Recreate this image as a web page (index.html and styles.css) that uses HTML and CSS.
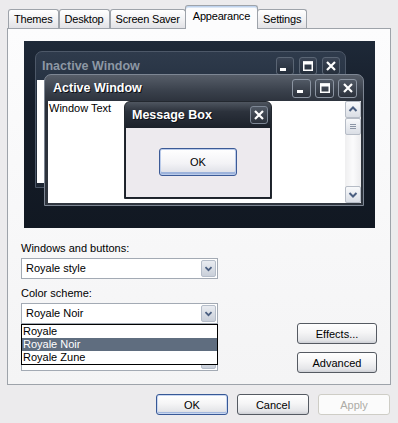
FILE: index.html
```html
<!DOCTYPE html>
<html>
<head>
<meta charset="utf-8">
<title>Display Properties - Appearance</title>
<link rel="stylesheet" href="styles.css">
</head>
<body>
<div class="dialog">
  <div class="tabs">
    <div class="tab">Themes</div>
    <div class="tab">Desktop</div>
    <div class="tab">Screen Saver</div>
    <div class="tab active">Appearance</div>
    <div class="tab">Settings</div>
  </div>
  <div class="panel">
    <div class="preview">
      <div class="win inactive">
        <div class="titlebar">
          <span class="title">Inactive Window</span>
          <div class="tbtns">
            <div class="tb"><svg viewBox="0 0 12 12" width="12" height="12"><rect x="1" y="8" width="6" height="3" fill="#fff"/></svg></div>
            <div class="tb"><svg viewBox="0 0 12 12" width="12" height="12"><rect x="1.75" y="2" width="8.5" height="8.25" fill="none" stroke="#fff" stroke-width="1.5"/><rect x="1" y="1.5" width="10" height="3" fill="#fff"/></svg></div>
            <div class="tb"><svg viewBox="0 0 12 12" width="12" height="12"><path d="M2 2 L10 10 M10 2 L2 10" stroke="#fff" stroke-width="2.2"/></svg></div>
          </div>
        </div>
        <div class="wbody"></div>
      </div>
      <div class="win active">
        <div class="titlebar">
          <span class="title">Active Window</span>
          <div class="tbtns">
            <div class="tb"><svg viewBox="0 0 12 12" width="12" height="12"><rect x="1" y="8" width="6" height="3" fill="#fff"/></svg></div>
            <div class="tb"><svg viewBox="0 0 12 12" width="12" height="12"><rect x="1.75" y="2" width="8.5" height="8.25" fill="none" stroke="#fff" stroke-width="1.5"/><rect x="1" y="1.5" width="10" height="3" fill="#fff"/></svg></div>
            <div class="tb"><svg viewBox="0 0 12 12" width="12" height="12"><path d="M2 2 L10 10 M10 2 L2 10" stroke="#fff" stroke-width="2.2"/></svg></div>
          </div>
        </div>
        <div class="wbody">
          <div class="wtext">Window Text</div>
          <div class="sb">
            <div class="sbbtn"><svg viewBox="0 0 14 15" width="14" height="15"><path d="M3.5 9 L7 5.5 L10.5 9" fill="none" stroke="#4A5E80" stroke-width="2"/></svg></div>
            <div class="sbbtn thumb"><svg viewBox="0 0 14 15" width="14" height="15"><path d="M4 5.5 H10 M4 7.5 H10 M4 9.5 H10" stroke="#8C96A6" stroke-width="1"/></svg></div>
            <div class="sbtrack"></div>
            <div class="sbbtn"><svg viewBox="0 0 14 15" width="14" height="15"><path d="M3.5 6 L7 9.5 L10.5 6" fill="none" stroke="#4A5E80" stroke-width="2"/></svg></div>
          </div>
        </div>
      </div>
      <div class="msgbox">
        <div class="titlebar">
          <span class="title">Message Box</span>
          <div class="tbtns">
            <div class="tb"><svg viewBox="0 0 12 12" width="12" height="12"><path d="M2 2 L10 10 M10 2 L2 10" stroke="#fff" stroke-width="2.2"/></svg></div>
          </div>
        </div>
        <div class="mbody">
          <div class="mok">OK</div>
        </div>
      </div>
    </div>
    <div class="controls">
      <div class="fields">
        <div class="lbl">Windows and buttons:</div>
        <div class="combo"><span class="ctext">Royale style</span><span class="carrow"><svg viewBox="0 0 15 17" width="15" height="17"><path d="M4 7 L7.5 10.5 L11 7" fill="none" stroke="#4A5E80" stroke-width="2"/></svg></span></div>
        <div class="lbl gap">Color scheme:</div>
        <div class="combo open"><span class="ctext">Royale Noir</span><span class="carrow"><svg viewBox="0 0 15 17" width="15" height="17"><path d="M4 7 L7.5 10.5 L11 7" fill="none" stroke="#4A5E80" stroke-width="2"/></svg></span>
          <div class="dlist">
            <div class="item">Royale</div>
            <div class="item sel">Royale Noir</div>
            <div class="item">Royale Zune</div>
          </div>
        </div>
        <div class="lbl gap2"></div>
        <div class="combo last"><span class="ctext"></span><span class="carrow"><svg viewBox="0 0 15 17" width="15" height="17"><path d="M4 7 L7.5 10.5 L11 7" fill="none" stroke="#4A5E80" stroke-width="2"/></svg></span></div>
      </div>
      <div class="side">
        <button class="btn wide">Effects...</button>
        <button class="btn wide">Advanced</button>
      </div>
    </div>
  </div>
  <div class="footer">
    <button class="btn default">OK</button>
    <button class="btn">Cancel</button>
    <button class="btn disabled">Apply</button>
  </div>
</div>
</body>
</html>
```
FILE: styles.css
```css
* { box-sizing: border-box; }
html, body { margin: 0; padding: 0; }
body {
  width: 398px;
  height: 423px;
  overflow: hidden;
  background: #ECEBED;
  font-family: "Liberation Sans", Arial, sans-serif;
  font-size: 11px;
  color: #000;
}

/* Tabs */
.tabs {
  display: flex;
  align-items: flex-end;
  height: 28px;
  padding-left: 8px;
}
.tab {
  height: 19px;
  padding: 0 5px;
  letter-spacing: -0.2px;
  line-height: 19px;
  border: 1px solid #9EA3AA;
  border-bottom: none;
  border-radius: 3px 3px 0 0;
  background: linear-gradient(#FFFFFF, #F1F1F3 55%, #E2E2E6);
  white-space: nowrap;
}
.tab.active {
  position: relative;
  z-index: 1;
  height: 24px;
  margin: 0 -1px -1px -1px;
  padding: 0 7px;
  line-height: 21px;
  background: #FCFCFD;
  box-shadow: inset 0 1px 0 #BFD3EE, inset 0 2px 0 #DCE7F5;
}

/* Panel */
.panel {
  margin-left: 7px;
  width: 384px;
  height: 357px;
  border: 1px solid #9EA3AA;
  background: linear-gradient(#FCFCFD, #F4F4F5);
  padding: 12px 13px 0 13px;
}

/* Preview */
.preview {
  position: relative;
  margin-left: 3px;
  width: 351px;
  height: 187px;
  background: linear-gradient(#1E2938 0%, #161E2A 35%, #111822 100%);
  overflow: hidden;
}
.win {
  position: absolute;
  display: flex;
  flex-direction: column;
  border-radius: 7px 7px 0 0;
}
.win.inactive {
  left: 11px;
  top: 10px;
  width: 311px;
  height: 137px;
  border: 1px solid #4D5868;
  background: linear-gradient(#2F3B4C 0%, #243040 30%, #1E2734 100%);
  padding: 0 1px 4px 1px;
}
.win.active {
  left: 20px;
  top: 33px;
  width: 320px;
  height: 132px;
  border: 1px solid #7D8693;
  background: linear-gradient(#575E69 0%, #3A414C 12%, #2A303A 22%, #30363F 100%);
  padding: 0 2px 2px 3px;
}
.titlebar {
  display: flex;
  align-items: center;
  justify-content: space-between;
  flex: none;
}
.inactive .titlebar { height: 28px; padding: 0 4px 0 5px; }
.active .titlebar { height: 26px; padding: 0 4px 0 5px; }
.title {
  font-weight: bold;
  font-size: 12.5px;
  white-space: nowrap;
}
.inactive .title { color: #8D97A4; }
.active .title, .msgbox .title { color: #FFFFFF; text-shadow: 1px 1px 0 #0C0F15; }
.tbtns { display: flex; gap: 5px; }
.active .tbtns { gap: 4px; }
.tb {
  width: 18px;
  height: 18px;
  border: 1px solid #7E8896;
  border-radius: 3px;
  background: linear-gradient(#515965, #2B313B);
  display: flex;
  align-items: center;
  justify-content: center;
}
.active .tb { width: 19px; height: 19px; border-color: #8C95A2; }
.inactive .tb {
  border-color: #5A6574;
  background: linear-gradient(#3A4454, #252E3B);
}
.wbody {
  flex: 1;
  background: #FFFFFF;
  display: flex;
}
.wtext {
  flex: 1;
  padding: 1px 0 0 1px;
  line-height: 13px;
}
.sb {
  width: 16px;
  display: flex;
  flex-direction: column;
  background: linear-gradient(90deg, #EFEFF0, #FBFBFC 50%, #ECECEE);
}
.sbbtn {
  height: 17px;
  border: 1px solid #B6BCC6;
  border-radius: 2px;
  background: linear-gradient(#F8F9FB, #DADEE5);
  display: flex;
  align-items: center;
  justify-content: center;
}
.sbtrack { flex: 1; }

/* Message box */
.msgbox {
  position: absolute;
  left: 100px;
  top: 60px;
  width: 148px;
  height: 98px;
  border: 1px solid #23282F;
  border-radius: 6px 6px 0 0;
  background: linear-gradient(#4F5660 0%, #2C323C 10%, #1B212A 27%, #1B212A 28%);
  display: flex;
  flex-direction: column;
}
.msgbox .titlebar { height: 26px; padding: 0 3px 0 7px; }
.mbody {
  flex: 1;
  background: #EDEAEE;
  margin: 0 1px 1px 1px;
  display: flex;
  justify-content: center;
  padding-top: 20px;
}
.mok {
  width: 78px;
  height: 28px;
  border: 1px solid #3C5A96;
  border-radius: 3px;
  background: linear-gradient(#FFFFFF, #F3F3F6 55%, #DADCE4);
  box-shadow: inset 0 0 0 1px #BACBEA, inset 0 -2px 0 1px #9DB3DB;
  display: flex;
  align-items: center;
  justify-content: center;
}

/* Controls */
.controls {
  display: flex;
  justify-content: space-between;
  margin-top: 14px;
}
.fields { width: 197px; }
.lbl { height: 13px; line-height: 13px; white-space: nowrap; }
.lbl.gap { margin-top: 8px; }
.lbl.gap2 { margin-top: 9px; }
.combo {
  position: relative;
  margin-top: 3px;
  height: 21px;
  border: 1px solid #A3AAB4;
  background: #FFFFFF;
  display: flex;
  align-items: stretch;
  padding: 1px;
}
.combo.last { margin-top: 4px; }
.ctext { flex: 1; line-height: 17px; padding-left: 3px; }
.carrow {
  width: 15px;
  border: 1px solid #B5BDC9;
  border-radius: 2px;
  background: linear-gradient(#E9ECF1, #C9CFD9);
  display: flex;
  align-items: center;
  justify-content: center;
  overflow: hidden;
}
.dlist {
  position: absolute;
  left: -1px;
  top: 20px;
  width: 197px;
  border: 1px solid #000000;
  background: #FFFFFF;
  z-index: 2;
}
.item { height: 13px; line-height: 13px; padding-left: 1px; }
.item.sel { background: #5F6D7F; color: #FFFFFF; }

.side {
  display: flex;
  flex-direction: column;
  gap: 8px;
  margin-top: 81px;
}

/* Buttons */
.btn {
  width: 72px;
  height: 21px;
  padding: 0;
  margin: 0;
  font-family: inherit;
  font-size: 11px;
  color: #000;
  border: 1px solid #555A62;
  border-radius: 3px;
  background: linear-gradient(#FFFFFF 0%, #F5F5F6 45%, #E4E5E8 85%, #CDCFD5 100%);
  display: flex;
  align-items: center;
  justify-content: center;
}
.btn.wide { width: 80px; }
.btn.default {
  border-color: #375896;
  box-shadow: inset 0 0 0 1px #C9D7F0, inset 0 -1px 0 1px #A3B8DE;
}
.btn.disabled {
  border-color: #CECDC6;
  background: #FBFBFB;
  color: #ADACA6;
}
.footer {
  display: flex;
  justify-content: flex-end;
  gap: 9px;
  padding-right: 8px;
  margin-top: 9px;
}
```
